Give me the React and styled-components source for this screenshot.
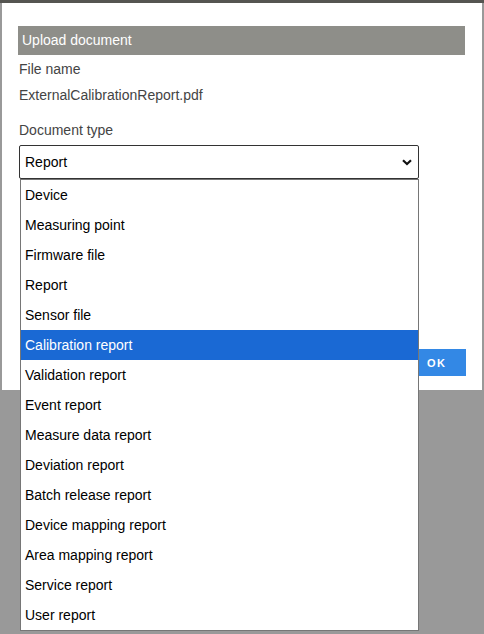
import React from "react";
import styled, { createGlobalStyle } from "styled-components";

const GlobalStyle = createGlobalStyle`
  html, body {
    margin: 0;
    background: #999999;
    font-family: "Liberation Sans", Arial, sans-serif;
  }
`;

const options = [
  "Device",
  "Measuring point",
  "Firmware file",
  "Report",
  "Sensor file",
  "Calibration report",
  "Validation report",
  "Event report",
  "Measure data report",
  "Deviation report",
  "Batch release report",
  "Device mapping report",
  "Area mapping report",
  "Service report",
  "User report",
];

const App = () => {
  return (
    <>
      <GlobalStyle />
      <StPage>
        <StTopStrip />
        <StModal>
          <StHeader>Upload document</StHeader>
          <StBody>
            <StLabel>File name</StLabel>
            <StValue>ExternalCalibrationReport.pdf</StValue>
            <StLabel $top={19}>Document type</StLabel>
            <StSelectWrap>
              <StSelect>
                <span>Report</span>
                <svg width="10" height="7" viewBox="0 0 10 7">
                  <polyline
                    points="1,1.2 5,5 9,1.2"
                    fill="none"
                    stroke="#111"
                    strokeWidth="2.2"
                  />
                </svg>
              </StSelect>
              <StList>
                {options.map((o) => (
                  <StOption key={o} $active={o === "Calibration report"}>
                    {o}
                  </StOption>
                ))}
              </StList>
            </StSelectWrap>
          </StBody>
          <StFooter>
            <StOkButton>OK</StOkButton>
          </StFooter>
        </StModal>
      </StPage>
    </>
  );
};

export default App;

const StPage = styled.div`
  width: 484px;
  height: 634px;
  overflow: hidden;
`;
const StTopStrip = styled.div`
  height: 3px;
  background: #555551;
`;
const StModal = styled.div`
  margin: 0 2px;
  height: 387px;
  box-sizing: border-box;
  background: #fff;
  padding: 23px 16px 0 16px;
  display: flex;
  flex-direction: column;
`;
const StHeader = styled.div`
  height: 29px;
  line-height: 29px;
  margin-right: 1px;
  padding-left: 4px;
  background: #8e8e89;
  color: #fff;
  font-size: 14px;
`;
const StBody = styled.div`
  padding-left: 1px;
  display: flex;
  flex-direction: column;
`;
const StLabel = styled.div`
  margin-top: ${(p) => p.$top || 6}px;
  font-size: 14px;
  line-height: 16px;
  color: #444;
`;
const StValue = styled.div`
  margin-top: 10px;
  font-size: 14px;
  line-height: 16px;
  color: #444;
`;
const StSelectWrap = styled.div`
  position: relative;
  margin-top: 7px;
  width: 400px;
`;
const StSelect = styled.div`
  height: 34px;
  box-sizing: border-box;
  border: 1px solid #333;
  border-radius: 2px;
  padding: 0 6px 0 5px;
  display: flex;
  align-items: center;
  justify-content: space-between;
  font-size: 14px;
  color: #000;
`;
const StList = styled.div`
  position: absolute;
  top: 34px;
  left: 1px;
  width: 399px;
  box-sizing: border-box;
  border: 1px solid #767676;
  background: #fff;
  z-index: 2;
`;
const StOption = styled.div`
  height: 30px;
  line-height: 30px;
  padding-left: 4px;
  font-size: 14px;
  color: ${(p) => (p.$active ? "#fff" : "#000")};
  background: ${(p) => (p.$active ? "#1a69d4" : "#fff")};
`;
const StFooter = styled.div`
  margin-top: 170px;
  display: flex;
  justify-content: flex-end;
`;
const StOkButton = styled.button`
  width: 48px;
  height: 27px;
  border: none;
  background: #3388e5;
  color: #fff;
  font-family: "Liberation Sans", Arial, sans-serif;
  font-weight: 700;
  font-size: 11px;
  letter-spacing: 1.5px;
  text-align: left;
  padding: 0 0 0 9px;
`;
